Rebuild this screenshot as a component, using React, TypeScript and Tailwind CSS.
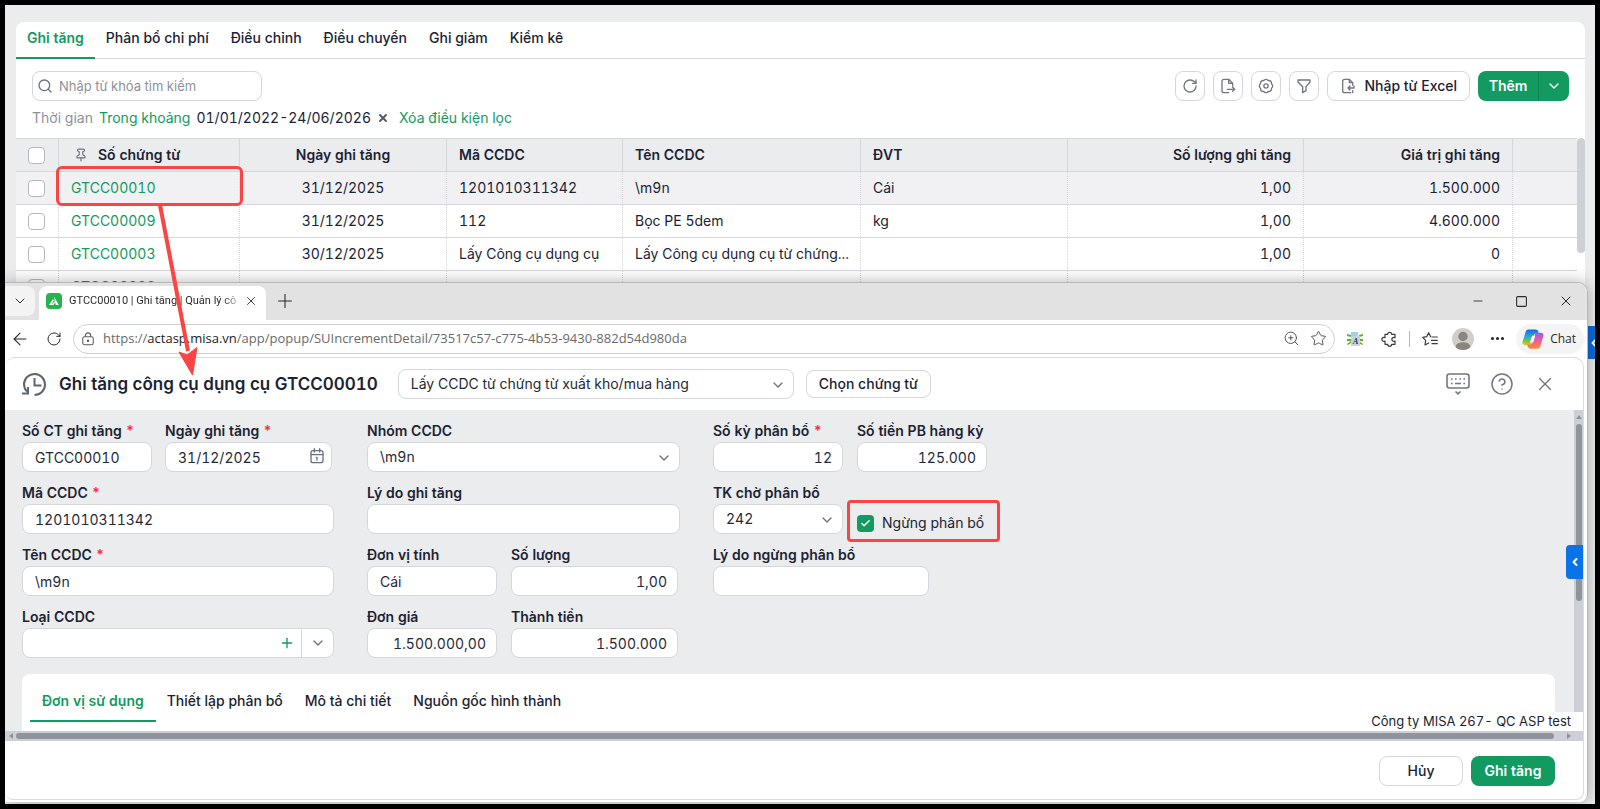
import type { ReactNode } from 'react';
import { ArrowLeft, Check, ChevronDown, ChevronLeft, CircleHelp, Minus, Pin, Plus, RotateCw, Search, Square, Star, X, ZoomIn } from 'lucide-react';

type Row = {
  code: string;
  date: string;
  item: string;
  name: string;
  unit: string;
  qty: string;
  value: string;
};

type FieldProps = {
  id: string;
  label: string;
  required?: boolean;
  className?: string;
};

const rows: Row[] = [
  { code: 'GTCC00010', date: '31/12/2025', item: '1201010311342', name: '\\m9n', unit: 'Cái', qty: '1,00', value: '1.500.000' },
  { code: 'GTCC00009', date: '31/12/2025', item: '112', name: 'Bọc PE 5dem', unit: 'kg', qty: '1,00', value: '4.600.000' },
  { code: 'GTCC00003', date: '30/12/2025', item: 'Lấy Công cụ dụng cụ', name: 'Lấy Công cụ dụng cụ từ chứng...', unit: '', qty: '1,00', value: '0' },
  { code: 'GTCC00002', date: '', item: '', name: '', unit: '', qty: '', value: '' },
];

const mainTabs = ['Ghi tăng', 'Phân bổ chi phí', 'Điều chỉnh', 'Điều chuyển', 'Ghi giảm', 'Kiểm kê'];
const detailTabs = ['Đơn vị sử dụng', 'Thiết lập phân bổ', 'Mô tả chi tiết', 'Nguồn gốc hình thành'];

const boxClass = 'block h-[30px] w-full rounded-lg border border-[#d5d7dc] bg-white text-sm text-[#1f2937]';
const headClass = 'border-y border-r border-[#d5d7dc] px-3 font-semibold';
const cellClass = 'border-r border-b border-[#d5d7dc] [border-right-style:dotted] px-3 whitespace-nowrap';

const Icon = ({ className, children }: { className: string; children: ReactNode }) => (
  <svg viewBox="0 0 24 24" fill="none" stroke="currentColor" strokeWidth="2" strokeLinecap="round" strokeLinejoin="round" className={className}>
    {children}
  </svg>
);

const ExportIcon = () => (
  <Icon className="size-4">
    <path d="M13 22H6a3 3 0 0 1-3-3V5a3 3 0 0 1 3-3h7l6 6v4M13 2v6h6M11 17h11M19 14l3 3-3 3" />
  </Icon>
);

const ImportIcon = () => (
  <Icon className="size-4">
    <path d="M19 11V7l-5-5H7a3 3 0 0 0-3 3v14a3 3 0 0 0 3 3h9M14 2v5h5M21 12v3h-9M15 12l-3 3 3 3M19 19v3" />
  </Icon>
);

const GearIcon = () => (
  <Icon className="size-4">
    <path d="M3.85 8.62a4 4 0 0 1 4.78-4.77 4 4 0 0 1 6.74 0 4 4 0 0 1 4.78 4.78 4 4 0 0 1 0 6.74 4 4 0 0 1-4.77 4.78 4 4 0 0 1-6.75 0 4 4 0 0 1-4.78-4.77 4 4 0 0 1 0-6.76Z" />
    <circle cx="12" cy="12" r="3.2" />
  </Icon>
);

const FunnelIcon = () => (
  <Icon className="size-4">
    <path d="M3 3h18v3l-6 7v6l-5 3v-9L3 6z" />
  </Icon>
);

const HistoryIcon = () => (
  <svg viewBox="0 0 26 26" fill="none" stroke="#5f6570" strokeWidth="2" className="size-[26px]">
    <path d="M6 20.500C4 18.500 3 16 3 13A10.500 10.500 0 1 1 13.500 24M1 22.500h6V16M13.500 7v7.500h7" />
  </svg>
);

const CalendarIcon = () => (
  <Icon className="pointer-events-none absolute top-[6px] right-[7px] size-4 text-[#6b7280]">
    <rect x="3" y="4" width="18" height="18" rx="3" />
    <path d="M8 1v5M16 1v5M3 10h18M12 14v4M11 14h1" />
  </Icon>
);

const KeyboardIcon = () => (
  <svg viewBox="0 0 24 24" fill="none" stroke="currentColor" strokeWidth="1.6" className="size-6">
    <rect x="1" y="2" width="22" height="14" rx="2.5" />
    <path d="M5 7h1.6M9 7h1.6M13.4 7H15M17.4 7H19M5 11.500h1.600M17.400 11.500H19M9 11.500h6M9.500 19.500l2.500 2.300 2.500-2.300" />
  </svg>
);

const PuzzleIcon = () => (
  <svg viewBox="0 0 24 24" fill="none" stroke="#3c3c3c" strokeWidth="1.8" strokeLinejoin="round" className="size-4">
    <path d="M6 5h4a3 3 0 1 1 6 0h5v5a3 3 0 1 0 0 5v5h-5a3 3 0 1 1-6 0H6v-5a3 3 0 1 1 0-5z" />
  </svg>
);

const FavoritesIcon = () => (
  <svg viewBox="0 0 24 24" fill="none" stroke="#3c3c3c" strokeWidth="1.8" strokeLinejoin="round" strokeLinecap="round" className="size-4">
    <path d="M13 8.500l-3-6-3 6-6 1 4.500 4.500-1 7 5.500-3M15 9h8M14 14h9M15 19h8" />
  </svg>
);

const LockIcon = () => (
  <svg viewBox="0 0 16 16" fill="none" stroke="#5c5c5c" strokeWidth="1.2" className="size-[14px] shrink-0">
    <rect x="2" y="5.500" width="12" height="9" rx="2" />
    <path d="M5 5.500V4a3 3 0 0 1 6 0v1.500" />
    <circle cx="8" cy="10" r="0.8" fill="#5c5c5c" />
  </svg>
);

const AppLogo = () => (
  <svg viewBox="0 0 16 16" className="size-4 shrink-0">
    <rect width="16" height="16" rx="4" fill="#27b34c" />
    <path d="M7.800 3.500l5 8.500h-3zM7 6l-4 6h4.500l1.500-2.500" fill="#fff" />
    <path d="M6.500 10.500L8 8" stroke="#27b34c" />
  </svg>
);

const TranslatorIcon = () => (
  <svg viewBox="0 0 16 16" className="size-4">
    <path d="M0 3l4 1v2L0 5zM0 8h4v2H0zM0 13l4-3v2l-3 2zM16 3l-4 1v2l4-1zM16 8h-4v2h4zM16 13l-4-3v2l3 2z" fill="#5fae2e" />
    <rect x="4" y="1" width="7" height="9" fill="#9fd0ee" />
    <rect x="4" y="5" width="9" height="10" fill="#c9d3dc" />
    <text x="6" y="13" fontSize="8" fontFamily="Liberation Serif, serif" fontStyle="italic" fontWeight="bold" fill="#24364b">A</text>
  </svg>
);

const CopilotIcon = () => (
  <svg viewBox="0 0 24 24" className="size-[22px]">
    <defs>
      <linearGradient id="cool" x1="0" y1="0" x2="0" y2="1">
        <stop offset="0" stopColor="#1668e0" />
        <stop offset="0.45" stopColor="#2aa9d8" />
        <stop offset="0.7" stopColor="#6cc24a" />
        <stop offset="1" stopColor="#f2c811" />
      </linearGradient>
      <linearGradient id="warm" x1="0" y1="0" x2="0" y2="1">
        <stop offset="0" stopColor="#9b59f0" />
        <stop offset="0.5" stopColor="#ee5d9a" />
        <stop offset="1" stopColor="#ff8a3d" />
      </linearGradient>
    </defs>
    <path d="M7 1.500h8c1.500 0 2.300 1 2.700 2.300L18.500 6h-3c-1.500 0-2.300 1-2.700 2.300L10 17c-.4 1.200-1.200 1.800-2.500 1.800H3.500C1 18.800 0 17 .8 14.500L4 4c.5-1.600 1.500-2.500 3-2.500z" fill="url(#cool)" />
    <path d="M17 22.500H9c-1.500 0-2.300-1-2.700-2.300L5.500 18h3c1.500 0 2.300-1 2.700-2.300L14 7c.4-1.200 1.200-1.800 2.500-1.800h4c2.500 0 3.500 1.800 2.700 4.300L20 20c-.5 1.600-1.500 2.500-3 2.500z" fill="url(#warm)" />
    <path d="M11 8.500h3.500l-2.300 7H8.700z" fill="#fff" />
  </svg>
);

const Field = ({ id, label, required, className, children }: FieldProps & { children: ReactNode }) => (
  <div className={className}>
    <label htmlFor={id} className="block h-[22px] text-sm leading-[22px] font-semibold whitespace-nowrap">
      {label} {required && <span className="text-red-500">*</span>}
    </label>
    {children}
  </div>
);

const TextField = ({ value, right, ...field }: FieldProps & { value: string; right?: boolean }) => (
  <Field {...field}>
    <input id={field.id} defaultValue={value} className={right ? `${boxClass} px-[10px] text-right` : `${boxClass} px-3`} />
  </Field>
);

const SelectBox = ({ id, value, label }: { id: string; value: string; label?: string }) => (
  <div className="relative">
    <select id={id} aria-label={label} className={`${boxClass} appearance-none px-3`}>
      <option>{value}</option>
    </select>
    <ChevronDown className="pointer-events-none absolute top-2 right-2 size-4 text-[#6b7280]" />
  </div>
);

const IconButton = ({ label, children }: { label: string; children: ReactNode }) => (
  <button aria-label={label} className="flex size-[30px] items-center justify-center rounded-lg border border-[#d5d7dc] bg-white text-[#717680]">
    {children}
  </button>
);

const TableCheck = ({ label }: { label: string }) => (
  <input type="checkbox" aria-label={label} className="block size-[17px] appearance-none rounded border border-[#b4b8c0] bg-white" />
);

const VoucherTable = () => (
  <table className="w-full table-fixed border-separate border-spacing-0">
    <thead>
      <tr className="h-[34px] bg-[#ebecee] text-left">
        <th className="w-[43px] border-y border-r border-[#d5d7dc] pl-3">
          <TableCheck label="Chọn tất cả" />
        </th>
        <th className={`${headClass} w-[181px]`}>
          <span className="flex items-center gap-[10px] pl-[3px]">
            <Pin className="size-[14px] text-[#6b7280]" />
            Số chứng từ
          </span>
        </th>
        <th className={`${headClass} w-[207px] text-center`}>Ngày ghi tăng</th>
        <th className={`${headClass} w-[176px]`}>Mã CCDC</th>
        <th className={`${headClass} w-[238px]`}>Tên CCDC</th>
        <th className={`${headClass} w-[207px]`}>ĐVT</th>
        <th className={`${headClass} w-[236px] text-right`}>Số lượng ghi tăng</th>
        <th className={`${headClass} w-[209px] text-right`}>Giá trị ghi tăng</th>
        <th className="border-y border-[#d5d7dc]" />
      </tr>
    </thead>
    <tbody>
      {rows.map((row, i) => (
        <tr key={row.code} className={i === 0 ? 'h-[33px] bg-[#f1f1f3]' : 'h-[33px]'}>
          <td className="border-r border-b border-[#d5d7dc] [border-right-style:dotted] pl-3">
            <TableCheck label={`Chọn ${row.code}`} />
          </td>
          <td className={cellClass}>
            <a href="#detail" className="text-[#129a61]">{row.code}</a>
          </td>
          <td className={`${cellClass} text-center`}>{row.date}</td>
          <td className={cellClass}>{row.item}</td>
          <td className={cellClass}>{row.name}</td>
          <td className={cellClass}>{row.unit}</td>
          <td className={`${cellClass} text-right`}>{row.qty}</td>
          <td className={`${cellClass} text-right`}>{row.value}</td>
          <td className="border-b border-[#d5d7dc]" />
        </tr>
      ))}
    </tbody>
  </table>
);

const BrowserChrome = () => (
  <div className="font-['Open_Sans','Noto_Sans',sans-serif] text-[#2b2b2b]">
    <div className="flex h-[37px] items-end bg-[#e2e2e2]">
      <button aria-label="Danh sách thẻ" className="mb-1 flex size-[30px] items-center justify-center rounded-r-lg bg-[#f3f3f3]">
        <ChevronDown className="size-4" strokeWidth={1.5} />
      </button>
      <div className="ml-1 flex h-[34px] w-[227px] items-center rounded-t-lg bg-white pr-2 pb-1 pl-[7px]">
        <AppLogo />
        <span className="ml-[7px] flex-1 [mask-image:linear-gradient(to_right,black_88%,transparent)] font-['Roboto','Noto_Sans',sans-serif] text-[11px] whitespace-nowrap">
          GTCC00010 | Ghi tăng | Quản lý cô
        </span>
        <button aria-label="Đóng thẻ">
          <X className="size-[14px]" strokeWidth={1.5} />
        </button>
      </div>
      <button aria-label="Thẻ mới" className="ml-2 flex h-[34px] items-center pb-1">
        <Plus className="size-[22px]" strokeWidth={1.2} />
      </button>
      <div className="ml-auto flex h-[34px] items-center gap-[30px] pr-[13px] pb-1">
        <button aria-label="Thu nhỏ"><Minus className="size-[14px]" strokeWidth={1.5} /></button>
        <button aria-label="Phóng to"><Square className="size-[13px]" strokeWidth={2} /></button>
        <button aria-label="Đóng"><X className="size-4" strokeWidth={1.5} /></button>
      </div>
    </div>

    <div className="flex h-[37px] items-center bg-white pr-[3px] pl-[5px]">
      <button aria-label="Quay lại"><ArrowLeft className="size-5" strokeWidth={1.3} /></button>
      <button aria-label="Tải lại trang" className="ml-4"><RotateCw className="size-4" strokeWidth={1.5} /></button>
      <div className="ml-[11px] flex h-[30px] flex-1 items-center rounded-full border border-[#cfcfcf] px-[7px]">
        <LockIcon />
        <p className="ml-2 flex-1 text-[13px] text-[#6a6a6a]">
          https://<span className="text-[#222]">actasp.misa.vn</span>/app/popup/SUIncrementDetail/73517c57-c775-4b53-9430-882d54d980da
        </p>
        <button aria-label="Thu phóng"><ZoomIn className="size-[17px] text-[#555]" strokeWidth={1.4} /></button>
        <button aria-label="Đánh dấu" className="ml-[10px]"><Star className="size-[17px] text-[#555]" strokeWidth={1.4} /></button>
      </div>
      <div className="flex items-center pl-3">
        <TranslatorIcon />
        <span className="ml-[18px]"><PuzzleIcon /></span>
        <span className="mx-3 h-4 w-px bg-[#b5b5b5]" />
        <FavoritesIcon />
        <svg viewBox="0 0 22 22" className="ml-[14px] size-[22px]">
          <clipPath id="avatar"><circle cx="11" cy="11" r="11" /></clipPath>
          <g clipPath="url(#avatar)">
            <rect width="22" height="22" fill="#d2cfcb" />
            <circle cx="11" cy="8.500" r="4.700" fill="#8a8581" />
            <ellipse cx="11" cy="19" rx="7.500" ry="4.800" fill="#8a8581" />
          </g>
        </svg>
        <button aria-label="Thêm tùy chọn" className="ml-[17px] flex gap-[2px]">
          <span className="size-[3px] rounded-full bg-[#222]" />
          <span className="size-[3px] rounded-full bg-[#222]" />
          <span className="size-[3px] rounded-full bg-[#222]" />
        </button>
        <button className="ml-3 flex h-[30px] items-center gap-[6px] rounded-full bg-[#f4f4f4] pr-2 pl-[6px] text-xs">
          <CopilotIcon />
          Chat
        </button>
      </div>
    </div>
  </div>
);

const DetailForm = () => (
  <form className="flex items-start gap-[33px]">
    <div className="flex w-[312px] flex-col gap-[10px]">
      <div className="flex gap-[13px]">
        <TextField id="voucherNo" label="Số CT ghi tăng" value="GTCC00010" required className="w-[130px]" />
        <Field id="voucherDate" label="Ngày ghi tăng" required className="w-[167px]">
          <div className="relative">
            <input id="voucherDate" defaultValue="31/12/2025" className={`${boxClass} px-3`} />
            <CalendarIcon />
          </div>
        </Field>
      </div>
      <TextField id="toolCode" label="Mã CCDC" value="1201010311342" required />
      <TextField id="toolName" label="Tên CCDC" value={'\\m9n'} required />
      <Field id="toolType" label="Loại CCDC">
        <div className="flex h-[30px] items-center rounded-lg border border-[#d5d7dc] bg-white">
          <input id="toolType" className="min-w-0 flex-1 px-3 outline-none" />
          <button type="button" aria-label="Thêm loại" className="px-[6px] text-[#129a61]">
            <Plus className="size-4" />
          </button>
          <button type="button" aria-label="Mở danh sách" className="flex h-full w-8 items-center justify-center border-l border-[#d5d7dc] text-[#6b7280]">
            <ChevronDown className="size-4" />
          </button>
        </div>
      </Field>
    </div>

    <div className="flex w-[313px] flex-col gap-[10px]">
      <Field id="toolGroup" label="Nhóm CCDC">
        <SelectBox id="toolGroup" value={'\\m9n'} />
      </Field>
      <TextField id="reason" label="Lý do ghi tăng" value="" />
      <div className="flex gap-[14px]">
        <TextField id="unit" label="Đơn vị tính" value="Cái" className="w-[130px]" />
        <TextField id="quantity" label="Số lượng" value="1,00" right className="w-[167px]" />
      </div>
      <div className="flex gap-[14px]">
        <TextField id="price" label="Đơn giá" value="1.500.000,00" right className="w-[130px]" />
        <TextField id="amount" label="Thành tiền" value="1.500.000" right className="w-[167px]" />
      </div>
    </div>

    <div className="flex flex-col gap-[10px]">
      <div className="flex gap-[14px]">
        <TextField id="periods" label="Số kỳ phân bổ" value="12" required right className="w-[130px]" />
        <TextField id="periodAmount" label="Số tiền PB hàng kỳ" value="125.000" right className="w-[130px]" />
      </div>
      <div className="flex gap-[14px]">
        <Field id="account" label="TK chờ phân bổ" className="w-[130px]">
          <SelectBox id="account" value="242" />
        </Field>
        <label className="relative flex h-[22px] items-center gap-2 self-end">
          <span className="relative flex size-[17px]">
            <input type="checkbox" defaultChecked className="size-[17px] appearance-none rounded bg-[#129a61]" />
            <Check className="pointer-events-none absolute top-[3px] left-[3px] size-[11px] text-white" strokeWidth={3} />
          </span>
          Ngừng phân bổ
          <span className="pointer-events-none absolute -top-3 -right-4 -bottom-2 -left-[10px] rounded border-3 border-[#fb4444]" />
        </label>
      </div>
      <TextField id="stopReason" label="Lý do ngừng phân bổ" value="" className="w-[216px]" />
    </div>
  </form>
);

const DetailWindow = () => (
  <section className="absolute top-[277px] right-[7px] bottom-[2px] left-0 flex flex-col overflow-hidden rounded-tr-[10px] rounded-br-lg border-t border-r border-[#b9b9b9] bg-white shadow-[0_0_16px_rgba(0,0,0,0.3)]">
    <BrowserChrome />

    <div className="mr-[3px] mb-[2px] flex min-h-0 flex-1 flex-col overflow-hidden rounded-t-[10px] rounded-b-lg border border-l-0 border-[#dcdcdc]">
      <header className="flex h-[52px] shrink-0 items-center pr-[27px] pl-4">
        <HistoryIcon />
        <h1 className="ml-3 text-[17px] font-semibold whitespace-nowrap">Ghi tăng công cụ dụng cụ GTCC00010</h1>
        <div className="ml-5 w-[396px]">
          <SelectBox id="source" label="Nguồn chứng từ" value="Lấy CCDC từ chứng từ xuất kho/mua hàng" />
        </div>
        <button className="ml-3 h-7 rounded-lg border border-[#d5d7dc] px-3 font-medium">Chọn chứng từ</button>
        <div className="ml-auto flex items-center gap-5 text-[#717680]">
          <button aria-label="Bàn phím"><KeyboardIcon /></button>
          <button aria-label="Trợ giúp"><CircleHelp className="size-6" strokeWidth={1.5} /></button>
          <button aria-label="Đóng"><X className="size-[22px]" strokeWidth={1.5} /></button>
        </div>
      </header>

      <div className="relative flex min-h-0 flex-1 bg-[#ebecee]">
        <div className="flex min-w-0 flex-1 flex-col pt-[10px] pr-[19px] pl-[17px]">
          <DetailForm />
          <div className="mt-4 flex-1 rounded-t-lg bg-white pt-2 pl-2 font-medium">
            {detailTabs.map((tab, i) => (
              <button key={tab} className={i === 0 ? 'h-10 border-b-2 border-[#129a61] px-3 font-semibold text-[#129a61]' : 'h-10 border-b-2 border-transparent px-[11px]'}>
                {tab}
              </button>
            ))}
          </div>
        </div>
        <div className="flex w-[9px] flex-col items-center bg-[#cccfd5]">
          <span className="mt-[5px] border-x-3 border-b-4 border-x-transparent border-b-[#8f939c]" />
          <span className="mt-[5px] h-[55%] w-[6px] rounded-full bg-[#8f939c]" />
        </div>
        <p className="absolute right-0 bottom-0 h-[19px] bg-white pr-3 pl-2 text-[13px] leading-[18px]">Công ty MISA 267- QC ASP test</p>
        <button aria-label="Mở bảng bên" className="absolute top-[135px] right-0 flex h-[34px] w-[17px] items-center justify-center rounded-l bg-[#0a73e8] text-white">
          <ChevronLeft className="size-3" strokeWidth={4} />
        </button>
      </div>

      <div className="flex h-[10px] shrink-0 items-center gap-[3px] bg-[#cccfd5] pr-3 pl-1">
        <span className="border-y-3 border-r-4 border-y-transparent border-r-[#8f939c]" />
        <span className="h-[6px] flex-1 rounded-full bg-[#8f939c]" />
        <span className="ml-[10px] border-y-3 border-l-4 border-y-transparent border-l-[#8f939c]" />
      </div>

      <footer className="flex h-[58px] shrink-0 items-center justify-end gap-2 pt-[2px] pr-7">
        <button className="h-[30px] w-[84px] rounded-lg border border-[#d5d7dc] bg-white font-medium">Hủy</button>
        <button className="h-[30px] w-[84px] rounded-lg bg-[#129a61] font-semibold text-white">Ghi tăng</button>
      </footer>
    </div>
  </section>
);

const App = () => {
  return (
    <div className="flex h-screen flex-col bg-black p-[5px] font-['Inter','Noto_Sans',sans-serif] text-sm text-[#1b2333] tabular-nums">
      <div className="relative flex-1 overflow-hidden bg-[#ebecee] pt-[17px] pr-[10px] pl-[11px]">
        <main className="rounded-t-lg bg-white">
          <nav className="flex h-[37px] border-b border-[#d5d7dc] font-medium">
            {mainTabs.map((tab, i) => (
              <button key={tab} className={i === 0 ? '-mb-px border-b-2 border-[#129a61] px-[11px] pb-[3px] font-semibold text-[#129a61]' : 'px-[11px] pb-1'}>
                {tab}
              </button>
            ))}
          </nav>

          <div className="flex justify-between px-4 pt-3">
            <div className="flex h-[30px] w-[230px] items-center gap-[6px] rounded-lg border border-[#d5d7dc] px-1">
              <Search className="size-4 shrink-0 text-[#6b7280]" />
              <input aria-label="Từ khóa" placeholder="Nhập từ khóa tìm kiếm" className="w-full text-[13px] outline-none placeholder:text-[#8e9199]" />
            </div>
            <div className="flex gap-2">
              <IconButton label="Tải lại"><RotateCw className="size-4" /></IconButton>
              <IconButton label="Xuất"><ExportIcon /></IconButton>
              <IconButton label="Thiết lập"><GearIcon /></IconButton>
              <IconButton label="Lọc"><FunnelIcon /></IconButton>
              <button className="flex h-[30px] items-center gap-2 rounded-lg border border-[#d5d7dc] px-3 font-medium whitespace-nowrap">
                <span className="text-[#717680]"><ImportIcon /></span>
                Nhập từ Excel
              </button>
              <div className="flex h-[30px] overflow-hidden rounded-lg bg-[#129a61] text-white">
                <button className="w-[61px] border-r border-[#0c8753] font-semibold">Thêm</button>
                <button aria-label="Thêm lựa chọn" className="flex w-[30px] items-center justify-center">
                  <ChevronDown className="size-4" />
                </button>
              </div>
            </div>
          </div>

          <div className="flex h-[37px] items-center gap-[6px] px-4 pb-1">
            <span className="text-[#8e9199]">Thời gian</span>
            <span className="text-[#129a61]">Trong khoảng</span>
            <span>01/01/2022-24/06/2026</span>
            <button aria-label="Bỏ lọc"><X className="size-3 text-[#555b66]" strokeWidth={4} /></button>
            <button className="ml-1 text-[#129a61]">Xóa điều kiện lọc</button>
          </div>

          <div className="flex">
            <div className="min-w-0 flex-1">
              <VoucherTable />
            </div>
            <div className="h-[115px] w-2 rounded-full bg-[#cdd0d5]" />
          </div>
        </main>

        <button aria-label="Mở bảng phụ" className="absolute top-[321px] right-0 flex h-[33px] w-2 items-center overflow-hidden bg-[#0a6cd8] pl-px text-white">
          <ChevronLeft className="size-3 shrink-0" strokeWidth={4} />
        </button>

        <DetailWindow />

        <div className="pointer-events-none absolute top-[161px] left-[51px] h-10 w-[187px] rounded-md border-3 border-[#fb4444]" />
        <svg viewBox="0 0 50 180" className="pointer-events-none absolute top-[200px] left-[150px] h-[180px] w-[50px]">
          <path d="M5 0L33 146" stroke="#fb4444" strokeWidth="4" />
          <path d="M37.500 170L24 147L32 150L42 142.500Z" fill="#fb4444" stroke="#fb4444" strokeLinejoin="round" />
        </svg>
      </div>
    </div>
  );
};

export default App;
